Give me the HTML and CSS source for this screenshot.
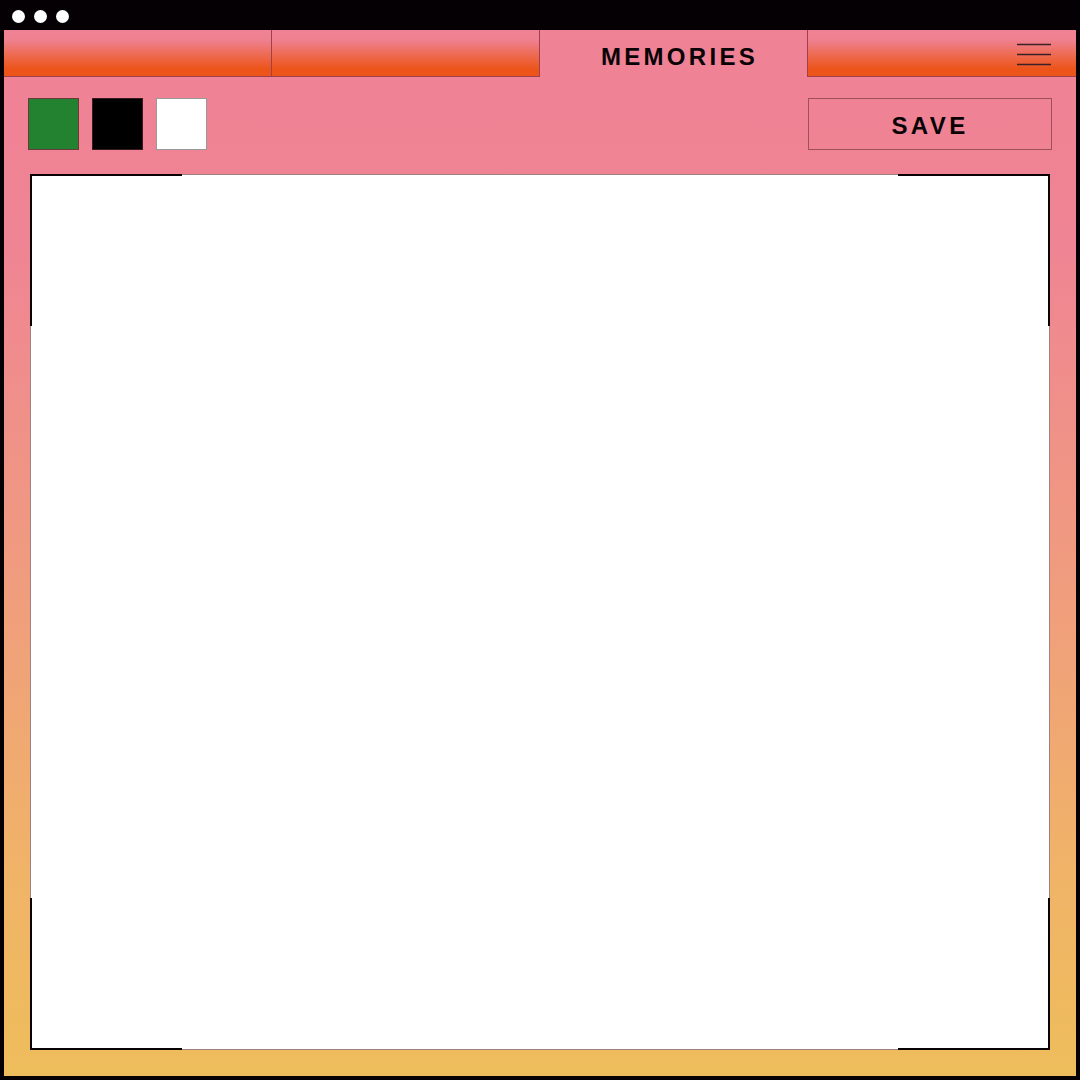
FILE: index.html
```html
<!DOCTYPE html>
<html>
<head>
<meta charset="utf-8">
<link rel="stylesheet" href="styles.css">
</head>
<body>
<div class="window">
  <div class="titlebar">
    <span class="dot"></span><span class="dot"></span><span class="dot"></span>
  </div>
  <div class="app">
    <div class="tabs">
      <div class="tab"></div>
      <div class="tab"></div>
      <div class="tab active">MEMORIES</div>
      <div class="tab last">
        <svg class="menu" width="34" height="24" viewBox="0 0 34 24">
          <line x1="0" y1="1.5" x2="34" y2="1.5"/>
          <line x1="0" y1="11.5" x2="34" y2="11.5"/>
          <line x1="0" y1="21.5" x2="34" y2="21.5"/>
        </svg>
      </div>
    </div>
    <div class="toolbar">
      <div class="swatches">
        <div class="swatch green"></div>
        <div class="swatch black"></div>
        <div class="swatch white"></div>
      </div>
      <button class="save">SAVE</button>
    </div>
    <div class="canvas-wrap">
      <div class="canvas">
        <span class="corner tl"></span>
        <span class="corner tr"></span>
        <span class="corner bl"></span>
        <span class="corner br"></span>
      </div>
    </div>
  </div>
</div>
</body>
</html>
```
FILE: styles.css
```css
html, body {
  margin: 0;
  padding: 0;
  background: #050003;
}
.window {
  width: 1080px;
  height: 1080px;
  box-sizing: border-box;
  background: #050003;
  padding: 0 4px 4px 4px;
  display: flex;
  flex-direction: column;
}
.titlebar {
  height: 30px;
  display: flex;
  align-items: center;
  gap: 9px;
  padding-left: 8px;
  padding-top: 2px;
  box-sizing: border-box;
}
.dot {
  width: 13px;
  height: 13px;
  border-radius: 50%;
  background: #ffffff;
}
.app {
  flex: 1;
  display: flex;
  flex-direction: column;
  background: linear-gradient(to bottom, #ef8295 0%, #ef8494 20%, #f09a80 50%, #f0b368 80%, #eebd5b 100%);
}
.tabs {
  height: 47px;
  display: flex;
}
.tab {
  flex: 0 0 268px;
  box-sizing: border-box;
  border-right: 1px solid #a0404a;
  border-bottom: 1px solid #a0404a;
  background: linear-gradient(to bottom, #ef8295 0%, #ef8090 22%, #ee6a50 55%, #ec5419 85%, #ec5419 100%);
  display: flex;
  align-items: center;
  justify-content: center;
  font-family: "Liberation Sans", Arial, sans-serif;
  font-weight: bold;
  font-size: 24px;
  letter-spacing: 3.3px;
  color: #0a0306;
}
.tab.active {
  background: #ef8295;
  border-bottom: none;
  padding-top: 6px;
  padding-left: 12px;
}
.tab.last {
  border-right: none;
  justify-content: flex-end;
  padding-right: 25px;
  padding-top: 4px;
}
.menu line {
  stroke: #3a2028;
  stroke-width: 1.5;
}
.toolbar {
  display: flex;
  justify-content: space-between;
  align-items: flex-start;
  padding: 21px 24px 0 24px;
  height: 97px;
  box-sizing: border-box;
}
.swatches {
  display: flex;
  gap: 13px;
}
.swatch {
  width: 51px;
  height: 52px;
  box-sizing: border-box;
  border: 1px solid #6a3a3a;
}
.green { background: #238230; }
.black { background: #000000; border-color: #3a1a20; }
.white { background: #ffffff; border-color: #999; }
.save {
  width: 244px;
  height: 52px;
  box-sizing: border-box;
  border: 1px solid #a0505a;
  background: transparent;
  font-family: "Liberation Sans", Arial, sans-serif;
  font-weight: bold;
  font-size: 24px;
  letter-spacing: 3.4px;
  color: #0a0306;
  padding: 4px 0 0 0;
  margin: 0;
}
.canvas-wrap {
  flex: 1;
  padding: 0 26px 26px 26px;
  display: flex;
}
.canvas {
  flex: 1;
  background: #ffffff;
  border: 1px solid #a08080;
  position: relative;
}
.corner {
  position: absolute;
  width: 150px;
  height: 150px;
  border-color: #0a0306;
  border-style: solid;
  border-width: 0;
}
.tl { top: -1px; left: -1px; border-top-width: 2px; border-left-width: 2px; }
.tr { top: -1px; right: -1px; border-top-width: 2px; border-right-width: 2px; }
.bl { bottom: -1px; left: -1px; border-bottom-width: 2px; border-left-width: 2px; }
.br { bottom: -1px; right: -1px; border-bottom-width: 2px; border-right-width: 2px; }
```
